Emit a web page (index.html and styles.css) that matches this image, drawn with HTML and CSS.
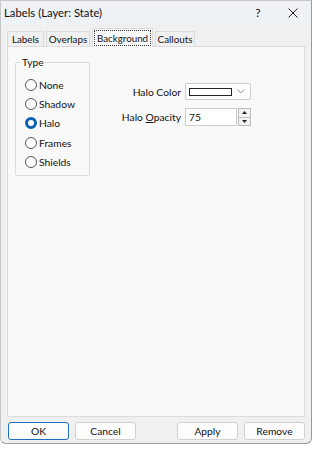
FILE: index.html
```html
<!DOCTYPE html>
<html lang="en">
<head>
    <meta charset="UTF-8">
    <title>Labels (Layer: State)</title>
    <link rel="stylesheet" href="styles.css">
</head>
<body>
    <div class="dialog">
        <div class="titlebar">
            <span class="title">Labels (Layer: State)</span>
            <span class="help">?</span>
            <span class="close">
                <svg width="10" height="10" viewBox="0 0 10 10"><path d="M0.5 0.5 L9.5 9.5 M9.5 0.5 L0.5 9.5" stroke="#222" stroke-width="1"/></svg>
            </span>
        </div>

        <div class="content">
            <div class="tabs">
                <div class="tab tab-labels">Labels</div>
                <div class="tab tab-overlaps">Overlaps</div>
                <div class="tab tab-background active"><span class="focus">Background</span></div>
                <div class="tab tab-callouts">Callouts</div>
            </div>

            <div class="panel">
                <fieldset class="group">
                    <legend>Type</legend>
                    <label class="radio"><span class="dot"></span>None</label>
                    <label class="radio"><span class="dot"></span>Shadow</label>
                    <label class="radio"><span class="dot checked"></span>Halo</label>
                    <label class="radio"><span class="dot"></span>Frames</label>
                    <label class="radio"><span class="dot"></span>Shields</label>
                </fieldset>

                <div class="fields">
                    <div class="field">
                        <span class="field-label">Halo Color</span>
                        <div class="combo">
                            <span class="swatch"></span>
                            <svg class="chev" width="8" height="5" viewBox="0 0 8 5"><path d="M0.5 0.5 L4 4 L7.5 0.5" fill="none" stroke="#888" stroke-width="1"/></svg>
                        </div>
                    </div>
                    <div class="field">
                        <span class="field-label">Halo <u>O</u>pacity</span>
                        <div class="spin">
                            <span class="spin-text">75</span>
                            <div class="spin-btns">
                                <span class="spin-btn"><svg width="5" height="3" viewBox="0 0 5 3"><path d="M2.5 0 L5 3 L0 3Z" fill="#222"/></svg></span>
                                <span class="spin-btn"><svg width="5" height="3" viewBox="0 0 5 3"><path d="M0 0 L5 0 L2.5 3Z" fill="#222"/></svg></span>
                            </div>
                        </div>
                    </div>
                </div>
            </div>

            <div class="buttons">
                <button class="btn default">OK</button>
                <button class="btn">Cancel</button>
                <span class="spacer"></span>
                <button class="btn">Apply</button>
                <button class="btn">Remove</button>
            </div>
        </div>
    </div>
</body>
</html>
```

FILE: styles.css
```css
* {
    margin: 0;
    padding: 0;
    box-sizing: border-box;
}

body {
    background: #fff;
    font-family: 'Lato', 'Noto Sans', sans-serif;
    font-size: 10.3px;
    color: #111;
    width: 316px;
    height: 457px;
    overflow: hidden;
}

.dialog {
    width: 312px;
    height: 444px;
    background: #f0f0f0;
    border: 1px solid #9a9a9a;
    border-top-color: #c8c8c8;
    border-left-color: #c8c8c8;
    border-radius: 0 0 6px 6px;
    display: flex;
    flex-direction: column;
}

.titlebar {
    height: 23px;
    background: #eef2f7;
    display: flex;
    align-items: center;
    padding-left: 3px;
    font-size: 11.3px;
}

.title {
    flex: 1;
}

.help {
    width: 32px;
    text-align: center;
    font-size: 12px;
}

.close {
    width: 37px;
    display: flex;
    justify-content: center;
}

.content {
    flex: 1;
    display: flex;
    flex-direction: column;
    padding: 3px 6px 0 6px;
}

.tabs {
    display: flex;
    align-items: flex-end;
    height: 19px;
    gap: 2px;
    font-size: 9.8px;
}

.tab {
    height: 16px;
    line-height: 15px;
    text-align: center;
    border: 1px solid #dcdcdc;
    border-bottom: none;
    background: #f0f0f0;
    margin-bottom: -1px;
    white-space: nowrap;
}

.tab-labels { width: 37px; }
.tab-overlaps { width: 44px; }
.tab-background { width: 61px; }
.tab-callouts { width: 40px; }

.tab.active {
    height: 19px;
    background: #fafafa;
    padding: 1px 1px 0 1px;
    position: relative;
    z-index: 1;
}

.focus {
    display: block;
    border: 1px dotted #333;
    line-height: 14px;
}

.panel {
    height: 371px;
    background: #f9f9f9;
    border: 1px solid #dcdcdc;
    display: flex;
    padding: 9px 7px;
}

.group {
    width: 75px;
    height: 120px;
    border: 1px solid #dcdcdc;
    border-radius: 2px;
    padding: 9px 0 0 9px;
    display: flex;
    flex-direction: column;
    gap: 4.4px;
}

.group legend {
    margin-left: -4px;
    padding: 0 1px;
    line-height: 12px;
}

.radio {
    display: flex;
    align-items: center;
    height: 15px;
    gap: 2px;
}

.dot {
    width: 12px;
    height: 12px;
    border: 1px solid #555;
    border-radius: 50%;
    background: #fff;
}

.dot.checked {
    border: 3px solid #0a5fb4;
    background: #fff;
}

.fields {
    display: flex;
    flex-direction: column;
    gap: 8px;
    padding-top: 27px;
}

.field {
    display: flex;
    align-items: center;
    gap: 4px;
}

.field-label {
    width: 91px;
    text-align: right;
}

.field-label u {
    text-decoration: underline;
}

.combo {
    width: 66px;
    height: 17px;
    background: #fff;
    border: 1px solid #ccc;
    border-radius: 2px;
    display: flex;
    align-items: center;
    padding: 0 5px 0 3px;
    gap: 5px;
}

.swatch {
    width: 45px;
    height: 8px;
    border: 1px solid #222;
    background: #fff;
}

.chev {
    margin-left: auto;
}

.spin {
    width: 66px;
    height: 18px;
    display: flex;
    gap: 1px;
}

.spin-text {
    flex: 1;
    background: #fff;
    border: 1px solid #ccc;
    padding-left: 3px;
    line-height: 16px;
}

.spin-btns {
    width: 13px;
    display: flex;
    flex-direction: column;
    border: 1px solid #bbb;
    background: #f3f3f3;
}

.spin-btn {
    flex: 1;
    display: flex;
    align-items: center;
    justify-content: center;
}

.spin-btn + .spin-btn {
    border-top: 1px solid #bbb;
}

.buttons {
    display: flex;
    padding: 5px 0 0 1px;
    gap: 6px;
}

.spacer {
    flex: 1;
}

.btn {
    width: 61px;
    height: 18px;
    font-family: inherit;
    font-size: 10.3px;
    color: #111;
    background: #fdfdfd;
    border: 1px solid #d0d0d0;
    border-radius: 3px;
}

.btn.default {
    border-color: #1f6fc0;
}
```
